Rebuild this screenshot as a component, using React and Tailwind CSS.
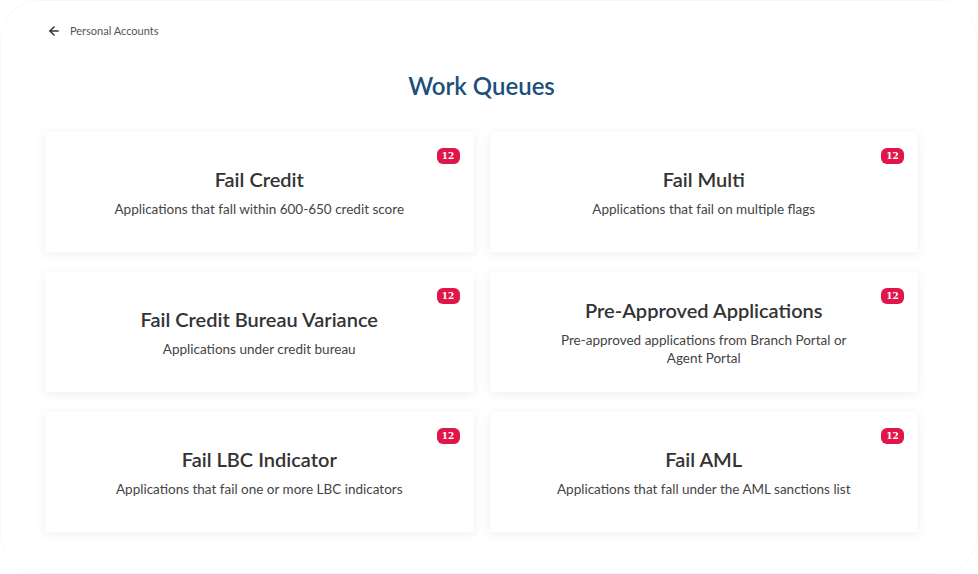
import React from "react";

const queues = [
  { title: "Fail Credit", desc: "Applications that fall within 600-650 credit score" },
  { title: "Fail Multi", desc: "Applications that fail on multiple flags" },
  { title: "Fail Credit Bureau Variance", desc: "Applications under credit bureau" },
  { title: "Pre-Approved Applications", desc: "Pre-approved applications from Branch Portal or Agent Portal" },
  { title: "Fail LBC Indicator", desc: "Applications that fail one or more LBC indicators" },
  { title: "Fail AML", desc: "Applications that fall under the AML sanctions list" },
];

function Card({ title, desc }) {
  return (
    <div className="relative h-[120px] bg-white rounded-[3px] shadow-[0_2px_12px_rgba(0,0,0,0.07)] flex flex-col items-center justify-center px-12 text-center">
      <span className="absolute top-[16px] right-[14px] h-[16px] w-[23px] rounded-[6px] bg-[#e0164b] text-white text-[9px] font-bold flex items-center justify-center font-['DejaVu_Serif',serif] leading-none">
        12
      </span>
      <h2 className="text-[20px] font-semibold text-[#333] leading-[24px]">{title}</h2>
      <p className="text-[13.5px] text-[#444] leading-[18px] mt-[9px] max-w-[310px]">{desc}</p>
    </div>
  );
}

export default function App() {
  return (
    <div className="relative w-[978px] h-[574px] bg-white overflow-hidden font-['Lato',sans-serif]">
      <div className="pointer-events-none absolute inset-0 rounded-[40px] border border-dotted border-[#f0f0f0]" />
      <div className="ml-[45px] w-[873px] pt-[22px]">
        <div className="flex items-center gap-[9px] h-[18px] pl-[2px]">
          <svg width="14" height="14" viewBox="0 0 24 24" fill="none" stroke="#333" strokeWidth="2.5" strokeLinecap="round" strokeLinejoin="round">
            <path d="M19 12H5" />
            <path d="M12 19l-7-7 7-7" />
          </svg>
          <span className="text-[11px] text-[#555]">Personal Accounts</span>
        </div>
        <h1 className="mt-[31px] text-center text-[24px] font-semibold text-[#1c4f7c] leading-[30px]">Work Queues</h1>
        <div className="mt-[31px] grid grid-cols-2 gap-x-[16px] gap-y-[20px]">
          {queues.map((q) => (
            <Card key={q.title} {...q} />
          ))}
        </div>
      </div>
    </div>
  );
}
